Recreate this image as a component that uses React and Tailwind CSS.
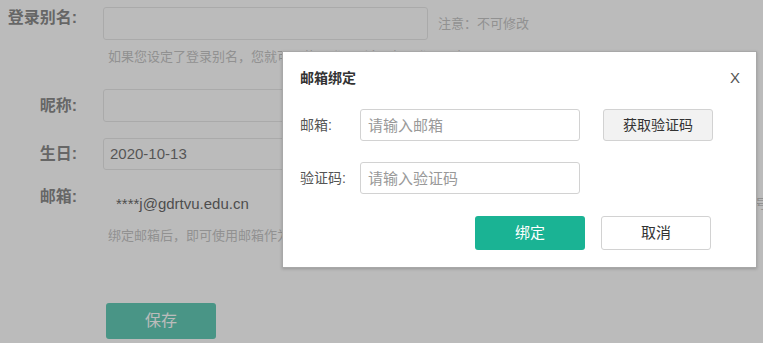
import React from 'react';

const font = "font-['Liberation_Sans','Noto_Sans_CJK_SC',sans-serif]";

function FormRow({ label, children, className = '' }) {
    return (
        <div className={`flex ${className}`}>
            <div className="w-[77px] shrink-0 text-right text-[16px] leading-[22px] font-bold text-[#555]">{label}</div>
            <div className="ml-[26px]">{children}</div>
        </div>
    );
}

export default function App() {
    return (
        <div className={`relative h-[343px] w-full overflow-hidden bg-white ${font}`}>
            {/* page behind the dialog */}
            <div className="pt-[7px]">
                <FormRow label="登录别名:" className="items-start">
                    <div className="flex items-center">
                        <div className="h-[33px] w-[325px] rounded-[3px] border border-[#ddd] bg-white" />
                        <span className="ml-[10px] text-[13px] text-[#aaa]">注意：不可修改</span>
                    </div>
                    <p className="mt-[7px] ml-[5px] text-[13px] leading-[20px] text-[#aaa] whitespace-nowrap">
                        如果您设定了登录别名，您就可以使用登录别名+密码登录平台
                    </p>
                </FormRow>
                <FormRow label="昵称:" className="mt-[22px] items-center">
                    <div className="h-[33px] w-[325px] rounded-[3px] border border-[#ddd] bg-white" />
                </FormRow>
                <FormRow label="生日:" className="mt-[16px] items-center">
                    <div className="flex h-[32px] w-[325px] items-center rounded-[3px] border border-[#ddd] bg-white pl-[6px] text-[15px] text-[#333]">
                        2020-10-13
                    </div>
                </FormRow>
                <FormRow label="邮箱:" className="mt-[16px] items-start">
                    <div className="mt-[7px] flex whitespace-nowrap">
                        <span className="ml-[13px] w-[639px] text-[15px] leading-[22px] text-[#222]">****j@gdrtvu.edu.cn</span>
                        <span className="text-[13px] leading-[22px] text-[#aaa]">号</span>
                    </div>
                    <p className="mt-[11px] ml-[5px] text-[13px] leading-[20px] text-[#aaa] whitespace-nowrap">
                        绑定邮箱后，即可使用邮箱作为账号登录平台
                    </p>
                </FormRow>
                <button className="ml-[106px] mt-[57px] h-[36px] w-[110px] rounded-[3px] bg-[#1ab394] text-[16px] text-white">
                    保存
                </button>
            </div>

            {/* shade */}
            <div className="absolute inset-0 bg-[rgba(119,119,119,0.5)]" />

            {/* dialog */}
            <div className="absolute left-[282px] top-[51px] h-[217px] w-[475px] border border-[#a8a8a8] bg-white shadow-[0_1px_3px_rgba(0,0,0,0.2)]">
                <div className="flex items-center justify-between pl-[17px] pr-[16px] pt-[16px]">
                    <h2 className="text-[14px] leading-[20px] font-bold text-[#333]">邮箱绑定</h2>
                    <button className="font-['Liberation_Sans',sans-serif] text-[15px] leading-[20px] text-[#555]">X</button>
                </div>

                <div className="mt-[21px] flex items-center pl-[17px]">
                    <span className="w-[60px] text-[14px] text-[#555]">邮箱:</span>
                    <input
                        placeholder="请输入邮箱"
                        className="h-[32px] w-[220px] rounded-[3px] border border-[#d2d2d2] px-[7px] text-[15px] outline-none placeholder:text-[#999]"
                    />
                    <button className="ml-[23px] h-[32px] w-[110px] rounded-[3px] border border-[#d2d2d2] bg-[#f2f2f2] text-[14px] text-[#333]">
                        获取验证码
                    </button>
                </div>

                <div className="mt-[21px] flex items-center pl-[17px]">
                    <span className="w-[60px] text-[14px] text-[#555]">验证码:</span>
                    <input
                        placeholder="请输入验证码"
                        className="h-[32px] w-[220px] rounded-[3px] border border-[#d2d2d2] px-[7px] text-[15px] outline-none placeholder:text-[#999]"
                    />
                </div>

                <div className="mt-[22px] flex justify-end gap-[16px] pr-[45px]">
                    <button className="h-[34px] w-[110px] rounded-[3px] bg-[#1ab394] text-[15px] text-white">绑定</button>
                    <button className="h-[34px] w-[110px] rounded-[3px] border border-[#d2d2d2] bg-white text-[15px] text-[#333]">取消</button>
                </div>
            </div>
        </div>
    );
}
